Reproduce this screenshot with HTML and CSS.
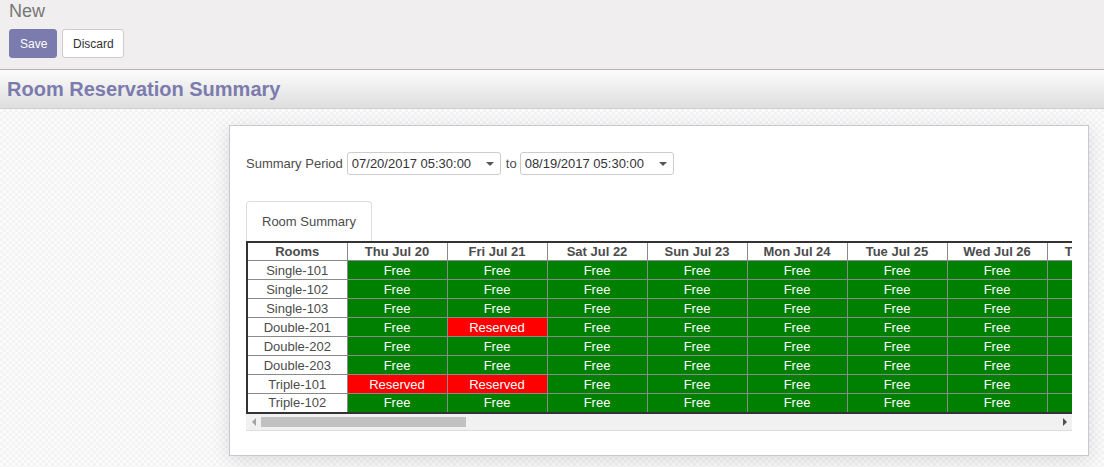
FILE: index.html
```html
<!DOCTYPE html>
<html>
<head>
<meta charset="utf-8">
<link rel="stylesheet" href="styles.css">
</head>
<body>
<div class="control-panel">
  <div class="breadcrumb">New</div>
  <div class="buttons">
    <button class="btn btn-primary">Save</button>
    <button class="btn btn-default">Discard</button>
  </div>
</div>
<div class="title-bar"><h1>Room Reservation Summary</h1></div>
<div class="content">
  <div class="sheet">
    <div class="period">
      <span class="label">Summary Period</span>
      <div class="select"><span>07/20/2017 05:30:00</span><i class="caret"></i></div>
      <span class="to">to</span>
      <div class="select"><span>08/19/2017 05:30:00</span><i class="caret"></i></div>
    </div>
    <div class="tabs"><div class="tab">Room Summary</div></div>
    <div class="scroller">
      <div class="viewport">
      <table class="summary">
        <thead>
          <tr><th>Rooms</th><th>Thu Jul 20</th><th>Fri Jul 21</th><th>Sat Jul 22</th><th>Sun Jul 23</th><th>Mon Jul 24</th><th>Tue Jul 25</th><th>Wed Jul 26</th><th>Thu Jul 27</th></tr>
        </thead>
        <tbody>
          <tr><td class="room">Single-101</td><td class="free">Free</td><td class="free">Free</td><td class="free">Free</td><td class="free">Free</td><td class="free">Free</td><td class="free">Free</td><td class="free">Free</td><td class="free"></td></tr>
          <tr><td class="room">Single-102</td><td class="free">Free</td><td class="free">Free</td><td class="free">Free</td><td class="free">Free</td><td class="free">Free</td><td class="free">Free</td><td class="free">Free</td><td class="free"></td></tr>
          <tr><td class="room">Single-103</td><td class="free">Free</td><td class="free">Free</td><td class="free">Free</td><td class="free">Free</td><td class="free">Free</td><td class="free">Free</td><td class="free">Free</td><td class="free"></td></tr>
          <tr><td class="room">Double-201</td><td class="free">Free</td><td class="res">Reserved</td><td class="free">Free</td><td class="free">Free</td><td class="free">Free</td><td class="free">Free</td><td class="free">Free</td><td class="free"></td></tr>
          <tr><td class="room">Double-202</td><td class="free">Free</td><td class="free">Free</td><td class="free">Free</td><td class="free">Free</td><td class="free">Free</td><td class="free">Free</td><td class="free">Free</td><td class="free"></td></tr>
          <tr><td class="room">Double-203</td><td class="free">Free</td><td class="free">Free</td><td class="free">Free</td><td class="free">Free</td><td class="free">Free</td><td class="free">Free</td><td class="free">Free</td><td class="free"></td></tr>
          <tr><td class="room">Triple-101</td><td class="res">Reserved</td><td class="res">Reserved</td><td class="free">Free</td><td class="free">Free</td><td class="free">Free</td><td class="free">Free</td><td class="free">Free</td><td class="free"></td></tr>
          <tr><td class="room">Triple-102</td><td class="free">Free</td><td class="free">Free</td><td class="free">Free</td><td class="free">Free</td><td class="free">Free</td><td class="free">Free</td><td class="free">Free</td><td class="free"></td></tr>
        </tbody>
      </table>
      </div>
      <div class="hscroll">
        <span class="arrow arrow-left"></span>
        <div class="track"><div class="thumb"></div></div>
        <span class="arrow arrow-right"></span>
      </div>
    </div>
  </div>
</div>
</body>
</html>
```

FILE: styles.css
```css
* { box-sizing: border-box; }
html, body { margin: 0; padding: 0; }
body {
  font-family: "Liberation Sans", Arial, sans-serif;
  font-size: 13px;
  color: #4c4c4c;
  width: 1104px;
  height: 467px;
  overflow: hidden;
  background-color: #fafafa;
}

.control-panel {
  background: #f0eeee;
  height: 70px;
  border-bottom: 1px solid #b5b5b5;
  padding: 0 9px;
}
.breadcrumb {
  font-size: 18px;
  line-height: 22px;
  color: #777;
}
.buttons {
  display: flex;
  gap: 5px;
  margin-top: 7px;
}
.btn {
  font-family: "Liberation Sans", Arial, sans-serif;
  font-size: 12px;
  height: 29px;
  border-radius: 3px;
  padding: 0 10px;
  cursor: pointer;
}
.btn-primary {
  background: #7c7bad;
  color: #fff;
  border: 1px solid #7c7bad;
  width: 48px;
}
.btn-default {
  background: #fff;
  color: #333;
  border: 1px solid #ccc;
  width: 62px;
}

.title-bar {
  height: 39px;
  background: linear-gradient(#fcfcfc, #dedede);
  border-bottom: 1px solid #cfcfcf;
  padding-left: 7px;
  display: flex;
  align-items: center;
}
.title-bar h1 {
  margin: 0;
  font-size: 20px;
  font-weight: bold;
  color: #7c7bad;
  line-height: 24px;
}

.content {
  height: 358px;
  padding: 16px 0 0 229px;
  background-color: #fbfbfb;
  background-image:
    conic-gradient(#f3f3f3 25%, transparent 0 50%, #f3f3f3 0 75%, transparent 0);
  background-size: 6px 6px;
}
.sheet {
  width: 860px;
  height: 331px;
  background: #fff;
  border: 1px solid #c8c8d3;
  box-shadow: 0 4px 18px rgba(0, 0, 0, 0.12);
  padding: 26px 15px 0 16px;
}

.period {
  display: flex;
  align-items: center;
  height: 23px;
}
.label {
  margin-right: 4px;
}
.to {
  margin: 0 3px 0 5px;
}
.select {
  width: 154px;
  height: 23px;
  border: 1px solid #ccc;
  border-radius: 3px;
  display: flex;
  align-items: center;
  justify-content: space-between;
  padding: 0 6px 0 4px;
  color: #333;
  font-size: 13px;
}
.caret {
  width: 0;
  height: 0;
  border-left: 4px solid transparent;
  border-right: 4px solid transparent;
  border-top: 4px solid #555;
}

.tabs {
  margin-top: 26px;
  display: flex;
}
.tab {
  height: 40px;
  padding: 0 15px;
  border: 1px solid #ddd;
  border-bottom: none;
  border-radius: 4px 4px 0 0;
  display: flex;
  align-items: center;
  color: #4c4c4c;
  font-size: 13px;
  white-space: nowrap;
}

.scroller {
  width: 826px;
  border-bottom: 1px solid #ddd;
}
.viewport {
  width: 826px;
  overflow: hidden;
}
.summary {
  border-collapse: collapse;
  table-layout: fixed;
  width: 900px;
}
.summary th, .summary td {
  width: 100px;
  height: 19px;
  padding: 0;
  line-height: 17px;
  text-align: center;
  border: 1px solid #8a8a8a;
  font-size: 13px;
  white-space: nowrap;
  overflow: hidden;
}
.summary th { height: 17px; }
.summary tr:first-child th { border-top: 2px solid #333; }
.summary tr:last-child td { border-bottom: 2px solid #333; }
.summary th:first-child, .summary td:first-child { border-left: 2px solid #333; }
.summary th {
  font-weight: bold;
  color: #4c4c4c;
  background: #fff;
}
.summary .room {
  color: #4c4c4c;
  background: #fff;
}
.summary .free {
  background: #008000;
  color: #fff;
}
.summary .res {
  background: #ff0000;
  color: #fff;
}

.hscroll {
  height: 16px;
  background: #f1f1f1;
  display: flex;
  align-items: center;
}
.arrow {
  width: 15px;
  height: 16px;
  display: flex;
  align-items: center;
  justify-content: center;
  flex: none;
}
.arrow::before {
  content: "";
  width: 0;
  height: 0;
  border-top: 4px solid transparent;
  border-bottom: 4px solid transparent;
}
.arrow-left::before { border-right: 4px solid #a3a3a3; }
.arrow-right::before { border-left: 4px solid #505050; }
.track {
  flex: 1;
  height: 16px;
  display: flex;
  align-items: center;
}
.thumb {
  width: 205px;
  height: 10px;
  background: #c1c1c1;
}
```
